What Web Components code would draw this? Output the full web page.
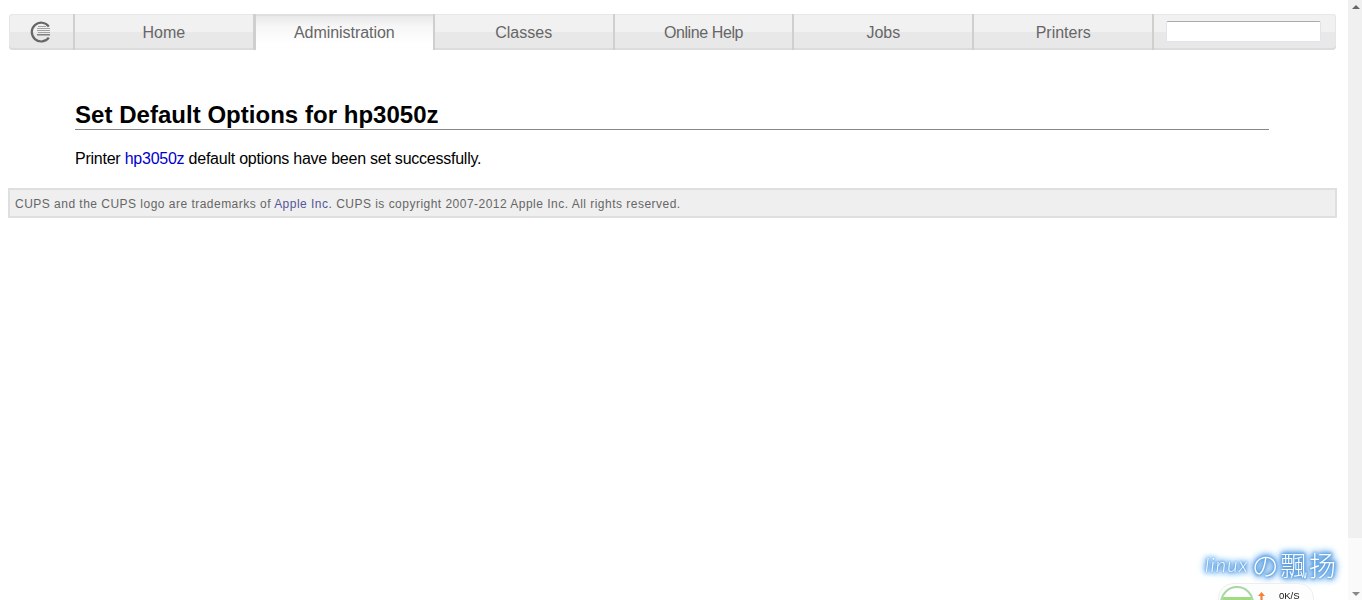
<!DOCTYPE html>
<html>
<head>
<meta charset="utf-8">
<title>Set Default Options for hp3050z - CUPS</title>
<style>
  html, body { margin: 0; height: 100%; overflow: hidden; background: #fff; }
  body { font-family: "Liberation Sans", Arial, sans-serif; }
</style>
</head>
<body>
<cups-page>
  <cups-nav>
    <cups-tab>Home</cups-tab>
    <cups-tab active>Administration</cups-tab>
    <cups-tab>Classes</cups-tab>
    <cups-tab style="letter-spacing:-.4px">Online Help</cups-tab>
    <cups-tab>Jobs</cups-tab>
    <cups-tab>Printers</cups-tab>
  </cups-nav>
  <cups-content title-text="Set Default Options for hp3050z">
    Printer <a href="#" style="color:#0000cc;text-decoration:none">hp3050z</a> default options have been set successfully.
  </cups-content>
  <cups-trailer></cups-trailer>
</cups-page>
<cups-scrollbar></cups-scrollbar>
<cups-watermark></cups-watermark>

<script>
class CupsPage extends HTMLElement {
  constructor() {
    super();
    this.attachShadow({ mode: "open" }).innerHTML = `
    <style>
      :host { display: block; width: 1348px; box-sizing: border-box; padding: 14px 12px 0 9px; }
    </style>
    <slot></slot>`;
  }
}

class CupsNav extends HTMLElement {
  constructor() {
    super();
    this.attachShadow({ mode: "open" }).innerHTML = `
    <style>
      :host {
        display: flex;
        height: 36px;
        border-radius: 4px;
        background: linear-gradient(#f1f1f1 0, #f1f1f1 50%, #e8e8e8 50%, #e8e8e8 100%);
        box-shadow: inset 0 1px 0 #e8e8e8, inset 0 -2px 0 #dcdcdc, inset 1px 0 0 #e6e6e6, inset -1px 0 0 #e6e6e6;
      }
      .logo {
        width: 64px;
        border-right: 2px solid #cfcfcf;
        display: flex;
        align-items: center;
        justify-content: center;
      }
      .search {
        flex: 1;
        border-left: 2px solid #cfcfcf;
        padding: 7px 15px 0 12px;
      }
      .search input {
        display: block;
        width: 100%;
        height: 21px;
        box-sizing: border-box;
        margin: 0;
        padding: 0;
        background: #fff;
        border: 1px solid #dfe3ee;
        border-top-color: #ababab;
        border-radius: 2px;
        outline: none;
      }
      .tabs { display: flex; }
    </style>
    <div class="logo">
      <svg width="24" height="26" viewBox="0 0 24 26">
        <path d="M19.8 7.6A9.4 9.4 0 1 0 19.8 18.6" fill="none" stroke="#666" stroke-width="2.2"/>
        <path d="M9 7.5h8M8 9.5h13M8 11.5h13M9 13.5h12" stroke="#a2a2a2" stroke-width="1"/>
        <path d="M8 15.8h13" stroke="#707070" stroke-width="1.3"/>
      </svg>
    </div>
    <div class="tabs"><slot></slot></div>
    <div class="search"><input type="search" aria-label="Search"></div>`;
  }
}

class CupsTab extends HTMLElement {
  constructor() {
    super();
    this.attachShadow({ mode: "open" }).innerHTML = `
    <style>
      :host {
        display: flex;
        align-items: center;
        justify-content: center;
        box-sizing: border-box;
        width: 179.8px;
        height: 36px;
        padding-top: 1px;
        font-size: 16px;
        color: #666;
        border-right: 2px solid #cfcfcf;
      }
      :host(:last-child) { border-right: 0; width: 178px; }
      :host([active]) {
        background: linear-gradient(#e6e6e6 0, #f6f6f6 12px, #fff 30px);
        box-shadow: inset 0 2px 0 #dfdfdf;
        margin-left: -1px;
        width: 181px;
        border-left: 2px solid #cfcfcf;
        letter-spacing: -0.05px;
      }
    </style>
    <slot></slot>`;
  }
}

class CupsContent extends HTMLElement {
  constructor() {
    super();
    this.attachShadow({ mode: "open" }).innerHTML = `
    <style>
      :host { display: block; padding: 51px 67px 0 66px; }
      h2 {
        margin: 0 0 19px;
        font-size: 24px;
        line-height: 28px;
        font-weight: bold;
        letter-spacing: 0.03px;
        color: #000;
        border-bottom: 1px solid #888;
      }
      p { margin: 0; font-size: 16px; line-height: 20px; color: #000; letter-spacing: -0.24px; }
    </style>
    <h2></h2>
    <p><slot></slot></p>`;
    this.shadowRoot.querySelector("h2").textContent = this.getAttribute("title-text");
  }
}

class CupsTrailer extends HTMLElement {
  constructor() {
    super();
    this.attachShadow({ mode: "open" }).innerHTML = `
    <style>
      :host {
        display: block;
        margin: 19px -1px 0;
        box-sizing: border-box;
        height: 30px;
        line-height: 28px;
        padding-left: 5px;
        font-size: 12px;
        letter-spacing: 0.48px;
        color: #666;
        background: #efefef;
        border: 2px solid #dfdfdf;
      }
      a { color: #555599; text-decoration: none; }
    </style>
    CUPS and the CUPS logo are trademarks of <a href="#">Apple Inc.</a> CUPS is copyright 2007-2012 Apple Inc. All rights reserved.`;
  }
}

class CupsScrollbar extends HTMLElement {
  constructor() {
    super();
    this.attachShadow({ mode: "open" }).innerHTML = `
    <style>
      :host {
        position: fixed;
        top: 0; right: 0; bottom: 0;
        width: 14px;
        background: #f0f0f0;
      }
      .up, .down { position: absolute; left: 4px; width: 0; height: 0; border: 4px solid transparent; }
      .up { top: 1px; border-bottom: 4px solid #666; }
      .down { bottom: 0; border-top: 4px solid #888; }
      .thumb { position: absolute; top: 538px; bottom: 0; left: 0; right: 0; background: #fafafa; }
    </style>
    <div class="thumb"></div>
    <div class="up"></div>
    <div class="down"></div>`;
  }
}

class CupsWatermark extends HTMLElement {
  constructor() {
    super();
    this.attachShadow({ mode: "open" }).innerHTML = `
    <style>
      :host { position: fixed; left: 1180px; top: 530px; width: 168px; height: 70px; overflow: hidden; }
      .mark {
        position: absolute;
        left: 25px;
        top: 16px;
        display: flex;
        align-items: center;
        height: 36px;
        white-space: nowrap;
        font-family: "Noto Sans CJK SC", "Noto Sans CJK JP", sans-serif;
        font-size: 27px;
        letter-spacing: 1.6px;
        font-weight: 300;
        color: #fff;
        text-shadow: 0 0 2px #5c9fe0, 0 0 3px #5c9fe0, 0 0 4px #5c9fe0, 0 0 5px #6aa8e4, 0 0 5px #6aa8e4, 0 0 6px #6aa8e4, 0 0 7px #7cb4ea, 0 0 8px #7cb4ea, 0 0 9px #8cbdec, 0 0 10px #a6ccf0, 0 0 11px #a6ccf0;
      }
      .mark .latin { font-family: "Lato", sans-serif; font-style: italic; font-size: 20px; letter-spacing: 1.2px; margin-right: 3px; }
      .widget {
        position: absolute;
        left: 38px; top: 53px;
        width: 94px; height: 30px;
        background: #fdfdfd;
        border: 1px solid #eeeeee;
        border-radius: 15px;
      }
      .ring {
        position: absolute;
        left: 1px; top: 2px;
        width: 34px; height: 34px;
        box-sizing: border-box;
        border: 2px solid #a5d8a5;
        border-radius: 50%;
        background: #fff;
        overflow: hidden;
      }
      .ring::after {
        content: "";
        position: absolute;
        left: 0; right: 0; top: 9px; height: 14px;
        background: #9edb83;
      }
      .arrow { position: absolute; left: 39px; top: 8px; display: block; }
      .rate { position: absolute; left: 60px; top: 8px; font-size: 9.5px; line-height: 8px; color: #111; font-family: "Liberation Sans", sans-serif; }
    </style>
    <div class="mark"><span class="latin">linux</span>の飄扬</div>
    <div class="widget">
      <div class="ring"></div>
      <svg class="arrow" width="7" height="8" viewBox="0 0 7 8"><path d="M3.5 0L7 4H4.6V8H2.4V4H0Z" fill="#f6803a"/></svg>
      <div class="rate">0K/S</div>
    </div>`;
  }
}

customElements.define("cups-page", CupsPage);
customElements.define("cups-nav", CupsNav);
customElements.define("cups-tab", CupsTab);
customElements.define("cups-content", CupsContent);
customElements.define("cups-trailer", CupsTrailer);
customElements.define("cups-scrollbar", CupsScrollbar);
customElements.define("cups-watermark", CupsWatermark);
</script>
</body>
</html>
